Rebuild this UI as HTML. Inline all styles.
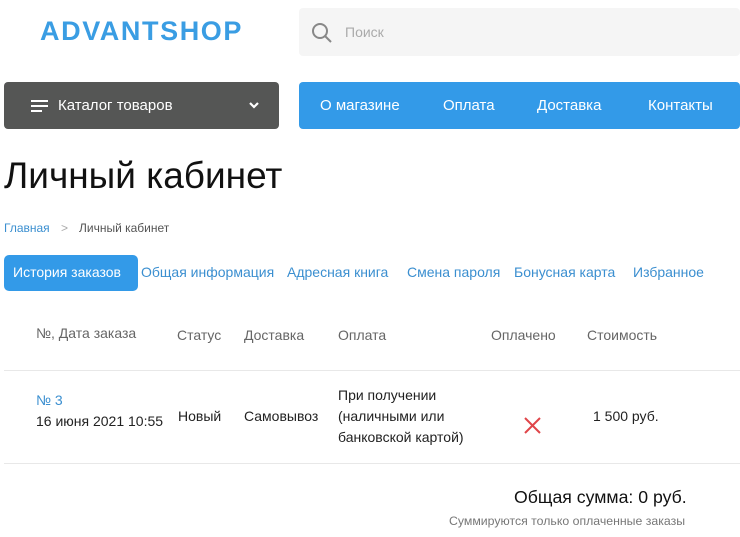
<!DOCTYPE html>
<html><head><meta charset="utf-8"><style>
*{margin:0;padding:0;box-sizing:border-box}
body{width:740px;height:537px;overflow:hidden;background:#fff;font-family:"Liberation Sans",sans-serif;color:#222;position:relative}
.a{position:absolute;white-space:nowrap}
.logo{left:40px;top:16px;font-size:27px;font-weight:bold;color:#3a9de3;letter-spacing:1.6px}
.search{left:299px;top:8px;width:441px;height:48px;background:#f5f5f5;border-radius:4px}
.cat{left:4px;top:82px;width:275px;height:47px;background:#555655;border-radius:4px;color:#fff;font-size:15px}
.nav{left:299px;top:82px;width:441px;height:47px;background:#339ae8;border-radius:4px;color:#fff;font-size:15px}
.h1{left:4px;top:155px;font-size:37px;color:#111}
.bc{top:221px;font-size:12px;color:#555}
.tab{top:264px;font-size:14px;color:#3b8fd0}
.th{top:327px;font-size:14px;color:#666}
.td{font-size:14px;color:#222}
</style></head><body>
<div class="a logo">ADVANTSHOP</div>
<div class="a search">
<svg class="a" style="left:12px;top:14px" width="22" height="22" viewBox="0 0 22 22"><circle cx="9" cy="9" r="7" fill="none" stroke="#888" stroke-width="2"/><path d="M14 14l6 6" stroke="#888" stroke-width="2"/></svg>
<div class="a" style="left:46px;top:16px;font-size:14px;color:#aaa">Поиск</div>
</div>
<div class="a cat">
<div class="a" style="left:27px;top:18px;width:17px;height:2px;background:#fff"></div>
<div class="a" style="left:27px;top:23px;width:17px;height:2px;background:#fff"></div>
<div class="a" style="left:27px;top:28px;width:11px;height:2px;background:#fff"></div>
<div class="a" style="left:54px;top:15px">Каталог товаров</div>
<svg class="a" style="left:245px;top:20px" width="10" height="7" viewBox="0 0 10 7"><path d="M1 1l4 4 4-4" fill="none" stroke="#fff" stroke-width="2.2"/></svg>
</div>
<div class="a nav">
<div class="a" style="left:21px;top:15px">О магазине</div>
<div class="a" style="left:144px;top:15px">Оплата</div>
<div class="a" style="left:238px;top:15px">Доставка</div>
<div class="a" style="left:349px;top:15px">Контакты</div>
</div>
<div class="a h1">Личный кабинет</div>
<div class="a bc" style="left:4px;color:#3b8fd0">Главная</div>
<div class="a bc" style="left:61px;color:#aaa">&gt;</div>
<div class="a bc" style="left:79px">Личный кабинет</div>
<div class="a" style="left:4px;top:255px;width:134px;height:36px;background:#339ae8;border-radius:5px"></div>
<div class="a tab" style="left:13px;color:#fff">История заказов</div>
<div class="a tab" style="left:141px">Общая информация</div>
<div class="a tab" style="left:287px">Адресная книга</div>
<div class="a tab" style="left:407px">Смена пароля</div>
<div class="a tab" style="left:514px">Бонусная карта</div>
<div class="a tab" style="left:633px">Избранное</div>
<div class="a th" style="left:36px;top:325px">№, Дата заказа</div>
<div class="a th" style="left:177px">Статус</div>
<div class="a th" style="left:244px">Доставка</div>
<div class="a th" style="left:338px">Оплата</div>
<div class="a th" style="left:491px">Оплачено</div>
<div class="a th" style="left:587px">Стоимость</div>
<div class="a" style="left:4px;top:370px;width:736px;height:1px;background:#e8e8e8"></div>
<div class="a td" style="left:36px;top:392px;color:#3b8fd0">№ 3</div>
<div class="a td" style="left:36px;top:413px">16 июня 2021 10:55</div>
<div class="a td" style="left:178px;top:408px">Новый</div>
<div class="a td" style="left:244px;top:408px">Самовывоз</div>
<div class="a td" style="left:338px;top:387px">При получении</div>
<div class="a td" style="left:338px;top:408px">(наличными или</div>
<div class="a td" style="left:338px;top:429px">банковской картой)</div>
<svg class="a" style="left:524px;top:417px" width="17" height="17" viewBox="0 0 17 17"><path d="M1 1l15 15M16 1L1 16" stroke="#e0454a" stroke-width="2"/></svg>
<div class="a td" style="left:593px;top:408px">1 500 руб.</div>
<div class="a" style="left:4px;top:463px;width:736px;height:1px;background:#e8e8e8"></div>
<div class="a" style="left:514px;top:487px;font-size:17.7px;color:#111">Общая сумма: 0 руб.</div>
<div class="a" style="left:449px;top:514px;font-size:12.3px;color:#777">Суммируются только оплаченные заказы</div>
</body></html>
